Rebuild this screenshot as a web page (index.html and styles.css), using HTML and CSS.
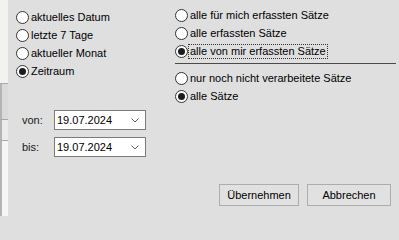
FILE: index.html
```html
<!DOCTYPE html>
<html lang="de">
<head>
<meta charset="utf-8">
<title>Filter</title>
<link rel="stylesheet" href="styles.css">
</head>
<body>
<div class="window">
  <div class="strip">
    <div class="strip-top"></div>
    <div class="strip-cell cell-a"></div>
    <div class="strip-cell cell-b"></div>
    <div class="strip-cell cell-c"></div>
  </div>
  <div class="dialog">
    <div class="content">
      <div class="col-left">
        <div class="radio-list">
          <div class="row"><span class="radio"></span><span class="label">aktuelles Datum</span></div>
          <div class="row"><span class="radio"></span><span class="label">letzte 7 Tage</span></div>
          <div class="row"><span class="radio"></span><span class="label">aktueller Monat</span></div>
          <div class="row"><span class="radio checked"></span><span class="label">Zeitraum</span></div>
        </div>
        <div class="dates">
          <div class="date-row">
            <span class="date-label">von:</span>
            <div class="date-box"><span class="date-text">19.07.2024</span>
              <svg class="chev" width="8" height="5" viewBox="0 0 8 5"><polyline points="0.5,0.5 4,4 7.5,0.5" fill="none" stroke="#606060" stroke-width="1"/></svg>
            </div>
          </div>
          <div class="date-row">
            <span class="date-label">bis:</span>
            <div class="date-box"><span class="date-text">19.07.2024</span>
              <svg class="chev" width="8" height="5" viewBox="0 0 8 5"><polyline points="0.5,0.5 4,4 7.5,0.5" fill="none" stroke="#606060" stroke-width="1"/></svg>
            </div>
          </div>
        </div>
      </div>
      <div class="col-right">
        <div class="radio-list">
          <div class="row"><span class="radio"></span><span class="label">alle für mich erfassten Sätze</span></div>
          <div class="row"><span class="radio"></span><span class="label">alle erfassten Sätze</span></div>
          <div class="row"><span class="radio checked"></span><span class="label focus">alle von mir erfassten Sätze</span></div>
        </div>
        <div class="separator"></div>
        <div class="radio-list">
          <div class="row"><span class="radio"></span><span class="label">nur noch nicht verarbeitete Sätze</span></div>
          <div class="row"><span class="radio checked"></span><span class="label">alle Sätze</span></div>
        </div>
      </div>
    </div>
    <div class="footer">
      <button class="btn btn-ok">Übernehmen</button>
      <button class="btn btn-cancel">Abbrechen</button>
    </div>
  </div>
</div>
</body>
</html>
```
FILE: styles.css
```css
html {
  margin: 0;
  padding: 0;
  background: #dfdfdf;
}
body {
  margin: 0;
  padding: 0;
  width: 399px;
  height: 216px;
  overflow: hidden;
  background: #dfdfdf;
  font-family: "Liberation Sans", Arial, sans-serif;
  font-size: 11px;
  color: #000;
}
.window {
  display: flex;
  width: 399px;
  height: 216px;
}
.strip {
  width: 8px;
  display: flex;
  flex-direction: column;
  flex-shrink: 0;
}
.strip-top {
  height: 83px;
  background: #f2f2ee;
}
.strip-cell {
  border-top: 1px solid #a8a8a8;
  border-left: 2px solid #b4b4b4;
  box-sizing: border-box;
}
.cell-a {
  height: 36px;
  background: #dadada;
}
.cell-b {
  height: 21px;
  background: #ececec;
}
.cell-c {
  flex: 1;
  background: #f6f6f6;
}
.dialog {
  flex: 1;
  display: flex;
  flex-direction: column;
}
.content {
  display: flex;
}
.col-left {
  width: 165px;
  padding-top: 8px;
  padding-left: 8px;
  box-sizing: border-box;
}
.col-right {
  width: 223px;
  padding-top: 6px;
  padding-left: 2px;
  box-sizing: border-box;
}
.radio-list {
  display: flex;
  flex-direction: column;
}
.row {
  height: 18px;
  display: flex;
  align-items: center;
}
.radio {
  width: 13px;
  height: 13px;
  box-sizing: border-box;
  border: 1px solid #333;
  border-radius: 50%;
  background: #fff;
  display: flex;
  align-items: center;
  justify-content: center;
  flex-shrink: 0;
}
.radio.checked::after {
  content: "";
  width: 7px;
  height: 7px;
  border-radius: 50%;
  background: #1c1c1c;
}
.label {
  border: 1px solid transparent;
  padding: 0 1px;
  line-height: 13px;
  white-space: nowrap;
}
.label.focus {
  border: 1px dotted #333;
}
.separator {
  height: 1px;
  background: #4a4a4a;
  margin: 3px 0 5px;
}
.dates {
  margin-top: 30px;
  padding-left: 6px;
  display: flex;
  flex-direction: column;
  gap: 7px;
}
.date-row {
  display: flex;
  align-items: center;
}
.date-label {
  width: 32px;
  color: #1a1a1a;
}
.date-box {
  width: 92px;
  height: 20px;
  box-sizing: border-box;
  border: 1px solid #7a7a7a;
  background: #fff;
  display: flex;
  align-items: center;
  justify-content: space-between;
  padding: 0 6px 0 2px;
}
.footer {
  margin-top: auto;
  padding: 0 8px 10px 0;
  display: flex;
  justify-content: flex-end;
  gap: 8px;
}
.btn {
  height: 22px;
  box-sizing: border-box;
  border: 1px solid #adadad;
  background: #e1e1e1;
  font-family: "Liberation Sans", Arial, sans-serif;
  font-size: 11px;
  color: #000;
  padding: 0;
  margin: 0;
}
.btn-ok {
  width: 80px;
}
.btn-cancel {
  width: 84px;
}
```
